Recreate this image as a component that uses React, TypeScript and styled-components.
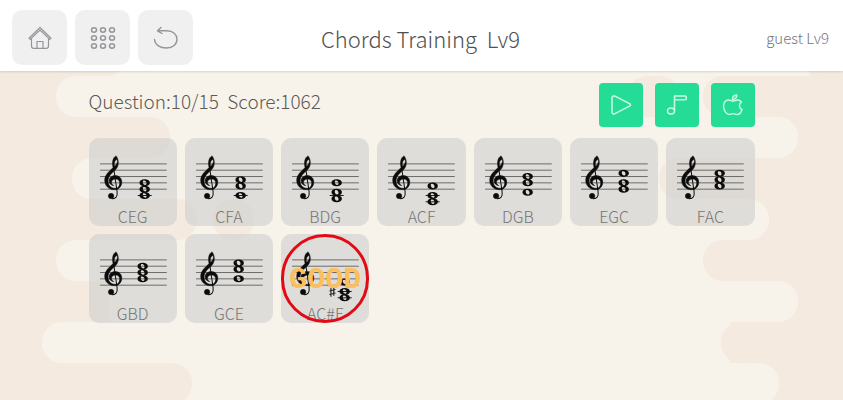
import React from 'react';
import styled, { createGlobalStyle } from 'styled-components';

const GlobalStyle = createGlobalStyle`
  *, *::before, *::after { box-sizing: border-box; }
  body {
    margin: 0;
    background: #f3eadf;
    color: #5c5a57;
    font-family: 'Noto Sans CJK JP', 'Noto Sans', sans-serif;
    font-weight: 300;
  }
`;

const Page = styled.div`
  position: relative;
  isolation: isolate;
  display: flex;
  flex-direction: column;
  min-height: 100vh;
  overflow: hidden;
`;

const Backdrop = styled.svg`
  position: absolute;
  inset: 0;
  z-index: -1;
  width: 100%;
  height: 100%;
`;

const Header = styled.header`
  display: grid;
  grid-template-columns: 1fr auto 1fr;
  align-items: center;
  padding: 10px 14px 6px 12px;
  background: #fff;
  box-shadow: 0 1px 2px rgba(120, 110, 80, 0.25);
`;

const Nav = styled.nav`
  display: flex;
  gap: 8px;
`;

const NavButton = styled.button`
  display: grid;
  place-items: center;
  width: 55px;
  height: 55px;
  padding: 0;
  border: 0;
  border-radius: 10px;
  background: #f0f0f1;
  color: #94969b;
`;

const Title = styled.h1`
  margin: 0;
  font-size: 22px;
  line-height: 32px;
  font-weight: 300;
  white-space: pre;
  color: #505050;
`;

const User = styled.span`
  justify-self: end;
  font-size: 15px;
  line-height: 24px;
  color: #777;
`;

const Main = styled.main`
  width: 100%;
  max-width: 690px;
  margin: 0 auto;
  padding: 12px;
`;

const StatusBar = styled.div`
  display: flex;
  justify-content: space-between;
  margin-bottom: 11px;
`;

const Status = styled.p`
  margin: 0;
  padding: 4px 0;
  font-size: 19px;
  line-height: 28px;
  white-space: pre;
`;

const Actions = styled.div`
  display: flex;
  gap: 12px;
`;

const ActionButton = styled.button`
  display: grid;
  place-items: center;
  width: 44px;
  height: 44px;
  padding: 0;
  border: 0;
  border-radius: 4px;
  background: #25dc96;
  color: #c9fbe4;
`;

const ChordGrid = styled.div`
  display: grid;
  grid-template-columns: repeat(7, 1fr);
  gap: 8px;
`;

const ChordCard = styled.button`
  position: relative;
  display: flex;
  flex-direction: column;
  justify-content: flex-end;
  aspect-ratio: 1;
  padding: 0;
  border: 0;
  border-radius: 10px;
  background: rgba(197, 199, 199, 0.5);
  color: #777572;
  font: inherit;
  font-size: 16px;
  line-height: 20px;
  text-align: center;
`;

const Staff = styled.svg`
  display: block;
  width: 100%;
  flex: 1;
  min-height: 0;
`;

const ChordName = styled.span`
  display: block;
  width: 100%;
`;

const Verdict = styled.strong`
  position: absolute;
  inset: 0;
  display: grid;
  place-items: center;
  padding-top: 4px;
  border: 3px solid #e20a14;
  border-radius: 50%;
  color: #fdbe5c;
  font-family: 'Liberation Mono', monospace;
  font-size: 30px;
  line-height: 32px;
  font-weight: 700;
`;

const ROW = 41;

const creamBands = [
  { row: 0, left: 56, right: 700 },
  { row: 1, left: 200, right: 798 },
  { row: 2, left: 72, right: 650 },
  { row: 3, left: 220, right: 769 },
  { row: 4, left: 56, right: 690 },
  { row: 5, left: 120, right: 798 },
  { row: 6, left: 42, right: 700 },
  { row: 7, left: 200, right: 779 },
];

const tanBands = [
  { row: -1, left: -40, right: 127 },
  { row: -1, left: 801, right: 900 },
  { row: 0, left: 627, right: 679 },
  { row: 0, left: 703, right: 900 },
  { row: 1, left: -40, right: 170 },
  { row: 2, left: 659, right: 900 },
  { row: 3, left: -40, right: 197 },
  { row: 3, left: 213, right: 254 },
  { row: 4, left: 703, right: 900 },
  { row: 5, left: -40, right: 108 },
  { row: 6, left: 721, right: 900 },
  { row: 7, left: -40, right: 192 },
];

function Clouds() {
  return (
    <Backdrop viewBox="0 0 843 400" preserveAspectRatio="xMidYMin slice" aria-hidden="true">
      <rect width="843" height="400" fill="#f4eae0" />
      <rect x="110" y="0" width="620" height="400" fill="#f7f3ea" />
      <rect x="110" y="35" width="700" height="41" fill="#f7f3ea" />
      {creamBands.map((b) => (
        <rect key={b.row} x={b.left} y={76 + b.row * ROW} width={b.right - b.left} height={ROW} rx="20" fill="#f7f3ea" />
      ))}
      {tanBands.map((b) => (
        <rect key={`${b.row}:${b.left}`} x={b.left} y={76 + b.row * ROW} width={b.right - b.left} height={ROW} rx="20" fill="#f4eae0" />
      ))}
    </Backdrop>
  );
}

const BOTTOM_LINE = 51;
const STEP = 3.15;
const staffLines = [0, 2, 4, 6, 8];

/* Steps count diatonic positions up from the bottom staff line (E4). */
type Chord = { name: string; steps: number[]; x: number; sharp?: boolean; correct?: boolean };

const chords: Chord[] = [
  { name: 'CEG', steps: [-2, 0, 2], x: 55.5 },
  { name: 'CFA', steps: [-2, 1, 3], x: 55.5 },
  { name: 'BDG', steps: [-3, -1, 2], x: 55.5 },
  { name: 'ACF', steps: [-4, -2, 1], x: 55.5 },
  { name: 'DGB', steps: [-1, 2, 4], x: 53.5 },
  { name: 'EGC', steps: [0, 2, 5], x: 53.5 },
  { name: 'FAC', steps: [1, 3, 5], x: 53.5 },
  { name: 'GBD', steps: [2, 4, 6], x: 53.5 },
  { name: 'GCE', steps: [2, 5, 7], x: 53.5 },
  { name: 'AC#F', steps: [-4, -2, 1], x: 63.5, sharp: true, correct: true },
];

function TrebleClef() {
  return (
    <g transform="translate(6 7.5) scale(0.3333)" fill="#0c0c0c" stroke="#0c0c0c" strokeWidth="1.6" strokeLinejoin="round">
      <path
        fillRule="evenodd"
        d="M54 66C50 48 54 35 63 31C73 44 71 62 62 72C50 83 39 92 39 106C39 119 48 128 60 128C70 128 76 120 76 112C77 122 70 132 58 132C41 132 29 120 29 104C29 88 42 78 54 66ZM58 62C66 56 69 49 66 41C60 43 56 50 58 62Z"
      />
      <path d="M62 100C54 100 49 104 49 110C49 114 51 117 56 120C47 118 42 113 42 106C42 96 51 90 61 90C73 90 80 99 80 110C80 121 73 129 63 132C71 127 74 120 74 113C74 105 69 100 62 100Z" />
      <path d="M55 62L66 138C68 152 62 160 51 159" fill="none" strokeWidth="3" />
      <circle cx="48" cy="151" r="8" />
    </g>
  );
}

function WholeNote({ x, y }: { x: number; y: number }) {
  return (
    <g transform={`translate(${x} ${y})`}>
      <path
        fillRule="evenodd"
        fill="#0c0c0c"
        d="M-5.2 0C-5.2-2.1-3.1-3.5 0-3.5S5.2-2.1 5.2 0 3.1 3.5 0 3.5-5.2 2.1-5.2 0ZM-1.9-.9C-1.9.8-.6 2.3.7 2.2 2.2 2 2.1-.1 1.200-1.300.2-2.600-1.900-2.600-1.900-.9Z"
      />
    </g>
  );
}

function ChordStaff({ chord }: { chord: Chord }) {
  const ledgers = [-2, -4].filter((s) => Math.min(...chord.steps) <= s);
  const yOf = (step: number) => BOTTOM_LINE - step * STEP;
  return (
    <Staff viewBox="0 0 88 68" preserveAspectRatio="xMidYMin meet" aria-hidden="true">
      <g stroke="#62615f" strokeWidth="0.9">
        {staffLines.map((s) => (
          <line key={s} x1="11" x2="77.5" y1={yOf(s)} y2={yOf(s)} />
        ))}
      </g>
      <g stroke="#222" strokeWidth="1">
        {ledgers.map((s) => (
          <line key={s} x1={chord.x - 7} x2={chord.x + 7} y1={yOf(s)} y2={yOf(s)} />
        ))}
      </g>
      <TrebleClef />
      {chord.steps.map((s) => (
        <WholeNote key={s} x={chord.x} y={yOf(s)} />
      ))}
      {chord.sharp && (
        <path d="M49.8 53.5v9M52.6 52.5v9M48.3 56.8l6-1.5M48.3 60.3l6-1.5" stroke="#222" strokeWidth="1.1" />
      )}
    </Staff>
  );
}

function HomeIcon() {
  return (
    <svg width="24" height="24" viewBox="0 0 24 24" fill="none" stroke="currentColor" strokeWidth="1.2" strokeLinejoin="round" strokeLinecap="round" aria-hidden="true">
      <path d="M1 12.200L12 1.500L23 12.200L21.800 13.400L12 4L2.200 13.400ZM3.500 12.500V20C3.500 21.500 4.300 22.300 5.800 22.300H18.200C19.700 22.300 20.500 21.500 20.500 20V12.500M9 22V15.500H15V22" />
    </svg>
  );
}

function GridIcon() {
  return (
    <svg width="26" height="26" viewBox="0 0 26 26" fill="none" stroke="currentColor" strokeWidth="1.5" aria-hidden="true">
      {[5, 13, 21].map((y) => [4, 13, 22].map((x) => <ellipse key={`${x}-${y}`} cx={x} cy={y} rx="2.500" ry="2.200" />))}
    </svg>
  );
}

function BackIcon() {
  return (
    <svg width="26" height="26" viewBox="0 0 26 26" fill="none" stroke="currentColor" strokeWidth="1.4" strokeLinecap="round" strokeLinejoin="round" aria-hidden="true">
      <path d="M8 2.500L4.500 5.800L9 8.500M4.500 5.800H14C20 5.800 24 9.300 24 14.200S20 23 13.500 23C6.500 23 2 19.500 1.500 14.500" />
    </svg>
  );
}

function PlayIcon() {
  return (
    <svg width="24" height="24" viewBox="0 0 24 24" fill="none" stroke="currentColor" strokeWidth="1.500" strokeLinejoin="round" aria-hidden="true">
      <path d="M3 5V19C3 20.800 4.500 21.400 6 20.700L20.500 13.200C21.800 12.500 21.800 11.300 20.500 10.600L6 3.200C4.500 2.500 3 3.200 3 5Z" />
    </svg>
  );
}

function NoteIcon() {
  return (
    <svg width="24" height="24" viewBox="0 0 24 24" fill="none" stroke="currentColor" strokeWidth="1.500" strokeLinejoin="round" aria-hidden="true">
      <path d="M9.500 18V3H20.500C21.700 3 21.700 6.800 20.500 6.800H9.500" />
      <ellipse cx="6" cy="18" rx="3.500" ry="3" />
    </svg>
  );
}

function AppleIcon() {
  return (
    <svg width="24" height="24" viewBox="0 0 24 24" fill="none" stroke="currentColor" strokeWidth="1.400" strokeLinejoin="round" aria-hidden="true">
      <path d="M12 8.200C10.500 8.200 9.500 7 7.500 7C4.500 7 2.500 9.600 2.500 13C2.500 17.200 5.500 21.500 8 21.500C9.600 21.500 10.400 20.600 12 20.600S14.400 21.500 16 21.500C18.200 21.500 20.300 19 21 16.500C17.800 15.200 17.600 10.800 20.500 9.200C19.500 7.800 18 7 16.500 7C14.500 7 13.500 8.200 12 8.200Z" />
      <path d="M11.500 6.500C11.300 4.200 13 2.300 15.800 2C16 4.600 14.200 6.500 11.500 6.500Z" />
    </svg>
  );
}

export default function App() {
  return (
    <>
      <GlobalStyle />
      <Page>
        <Clouds />
        <Header>
          <Nav aria-label="Main">
            <NavButton type="button" aria-label="Home"><HomeIcon /></NavButton>
            <NavButton type="button" aria-label="Menu"><GridIcon /></NavButton>
            <NavButton type="button" aria-label="Back"><BackIcon /></NavButton>
          </Nav>
          <Title>{'Chords Training  Lv9'}</Title>
          <User>guest Lv9</User>
        </Header>
        <Main>
          <StatusBar>
            <Status>{'Question:10/15  Score:1062'}</Status>
            <Actions>
              <ActionButton type="button" aria-label="Play"><PlayIcon /></ActionButton>
              <ActionButton type="button" aria-label="Sound"><NoteIcon /></ActionButton>
              <ActionButton type="button" aria-label="Apple"><AppleIcon /></ActionButton>
            </Actions>
          </StatusBar>
          <ChordGrid>
            {chords.map((chord) => (
              <ChordCard key={chord.name} type="button">
                <ChordStaff chord={chord} />
                <ChordName>{chord.name}</ChordName>
                {chord.correct && <Verdict>GOOD</Verdict>}
              </ChordCard>
            ))}
          </ChordGrid>
        </Main>
      </Page>
    </>
  );
}
